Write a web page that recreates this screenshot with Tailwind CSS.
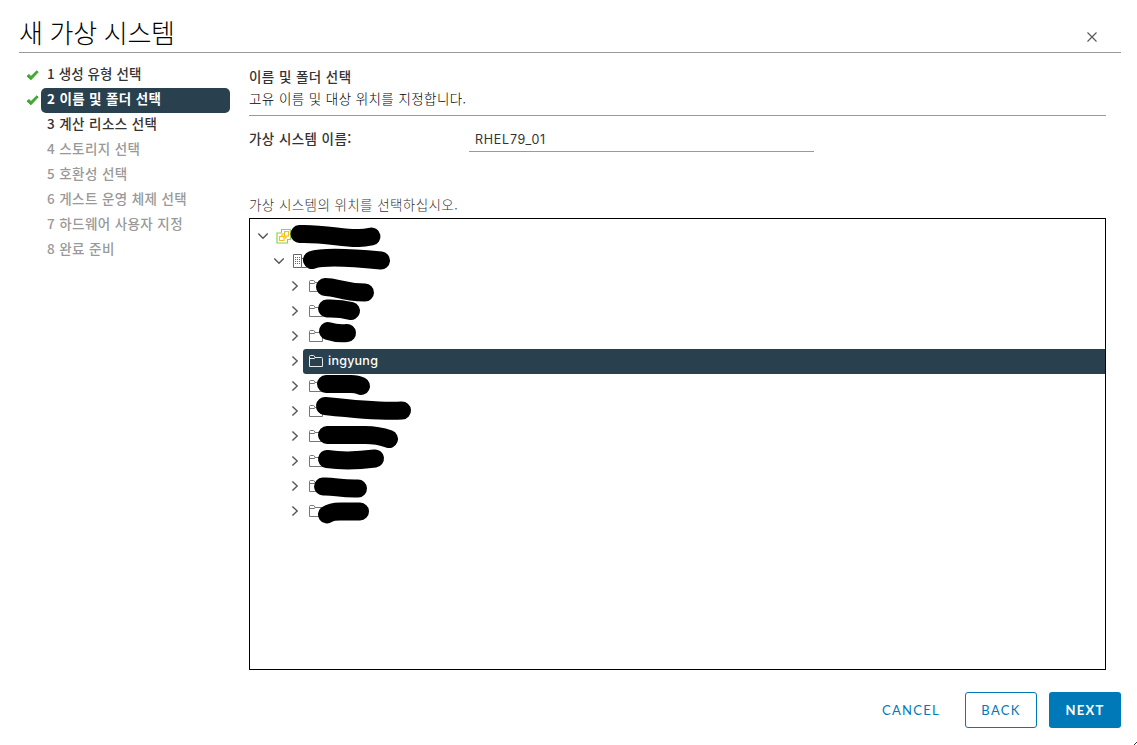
<!DOCTYPE html>
<html lang="ko">
<head>
<meta charset="utf-8">
<title>새 가상 시스템</title>
<script src="https://cdn.jsdelivr.net/npm/@tailwindcss/browser@4"></script>
</head>
<body class="bg-white overflow-hidden">
<svg class="hidden">
  <symbol id="check" viewBox="0 0 13 11"><path d="M1 6.2 2.8 4.4 5 6.4 10.8 .8 12.2 2.1 5 9.8Z" fill="#35b522" stroke="#23851a" stroke-width=".7" stroke-linejoin="round"/></symbol>
  <symbol id="down" viewBox="0 0 12 8"><path d="M1.3 1.5 6 6.2 10.7 1.5" fill="none" stroke="#565656" stroke-width="1.4"/></symbol>
  <symbol id="right" viewBox="0 0 8 12"><path d="M1.4 1.4 6.2 6 1.4 10.6" fill="none" stroke="#565656" stroke-width="1.4"/></symbol>
  <symbol id="folder" viewBox="0 0 14 14"><path d="M.5 2.5Q.5 1.500 1.500 1.500H4.500Q5.500 1.500 6 3.500H12.500Q13.500 3.500 13.500 4.500V12.500H.5ZM.5 4.500H5.500L6 3.500" fill="none" stroke="currentColor"/></symbol>
</svg>
<div class="w-[1137px] h-[745px] relative flex flex-col text-[#333] text-[13.5px] font-['Noto_Sans_CJK_KR',sans-serif] whitespace-nowrap">
  <header class="ml-[19px] mr-4 h-[53px] shrink-0 border-b border-[#9a9a9a] flex justify-between">
    <h1 class="mt-[13px] text-[26px] leading-[38px] tracking-[-0.3px] font-light text-black">새 가상 시스템</h1>
    <svg class="w-[10px] h-[10px] mt-[32px] mr-6" viewBox="0 0 10 10"><path d="M.5 .5 9.5 9.5M9.5 .5 .5 9.5" stroke="#565656" stroke-width="1.1"/></svg>
  </header>
  <div class="flex h-[617px] shrink-0">
    <nav class="w-[249px] pt-[10px] pl-[26px] font-medium tracking-[0.4px]">
      <ol class="leading-[20px]">
        <li class="flex h-[25px] tracking-[0.1px]"><svg class="w-[13px] h-[11px] mr-[2px] mt-[7px]"><use href="#check"/></svg><span class="pl-[6px]">1 생성 유형 선택</span></li>
        <li class="flex h-[25px]"><svg class="w-[13px] h-[11px] mr-[2px] mt-[7px]"><use href="#check"/></svg><span class="pl-[6px] w-[189px] h-[25px] rounded-[5px] bg-[#29404e] text-white font-bold tracking-[0.35px]">2 이름 및 폴더 선택</span></li>
        <li class="h-[25px] pl-[21px]">3 계산 리소스 선택</li>
        <li class="h-[25px] pl-[21px] text-[#999]">4 스토리지 선택</li>
        <li class="h-[25px] pl-[21px] text-[#999]">5 호환성 선택</li>
        <li class="h-[25px] pl-[21px] text-[#999]">6 게스트 운영 체제 선택</li>
        <li class="h-[25px] pl-[21px] text-[#999]">7 하드웨어 사용자 지정</li>
        <li class="h-[25px] pl-[21px] text-[#999]">8 완료 준비</li>
      </ol>
    </nav>
    <main class="w-[857px] flex flex-col tracking-[0.42px]">
      <div class="h-[63px] pt-[12px] border-b border-[#9a9a9a]">
        <h2 class="leading-[22px] font-medium">이름 및 폴더 선택</h2>
        <p class="leading-[22px] font-light text-black">고유 이름 및 대상 위치를 지정합니다.</p>
      </div>
      <div class="flex h-[78px]">
        <label class="w-[220px] pt-[11px] leading-[22px] font-medium">가상 시스템 이름:</label>
        <div class="w-[345px] h-[36px] pt-[12px] pl-[6px] border-b border-[#9a9a9a] font-[Inter] text-[12.5px] leading-[24px] tracking-[0.75px]">RHEL79_01</div>
      </div>
      <p class="h-[24px] leading-[20px] font-light">가상 시스템의 위치를 선택하십시오.</p>
      <div class="relative h-[452px] border border-black pt-[4px] text-[#777]">
        <div class="flex items-center h-[25px] pl-[7px]"><svg class="w-3 h-2"><use href="#down"/></svg>
          <svg class="w-4 h-4 ml-[7px]" viewBox="0 0 16 16" fill="none"><path d="M5.5 4.500V1.500H14.500V11.500H11.500V15H1V5H5.500" stroke="#8fd14a" stroke-width="1.2"/><path d="M8.500 3.500H12.500V8H8.500ZM3.500 8.500H8V12.500H3.500ZM8.500 10H10V8M6 8V6H8" stroke="#f5bd16" stroke-width="1.1"/></svg></div>
        <div class="flex items-center h-[25px] pl-[23px]"><svg class="w-3 h-2"><use href="#down"/></svg>
          <svg class="w-4 h-4 ml-[7px]" viewBox="0 0 16 16" fill="none" stroke="#666"><path d="M1.5 1.5H9.5V14.5H1.5ZM9.5 5.5H14.5V14.5H9.5"/><path d="M3 4.5H9M3 6.5H9M3 8.5H9M3 10.500H9" stroke-dasharray="1 1"/></svg></div>
        <div class="flex items-center h-[25px] pl-[41px]"><svg class="w-2 h-3"><use href="#right"/></svg><svg class="size-[14px] ml-[10px]"><use href="#folder"/></svg></div>
        <div class="flex items-center h-[25px] pl-[41px]"><svg class="w-2 h-3"><use href="#right"/></svg><svg class="size-[14px] ml-[10px]"><use href="#folder"/></svg></div>
        <div class="flex items-center h-[25px] pl-[41px]"><svg class="w-2 h-3"><use href="#right"/></svg><svg class="size-[14px] ml-[10px]"><use href="#folder"/></svg></div>
        <div class="flex items-center h-[25px] pl-[41px]"><svg class="w-2 h-3"><use href="#right"/></svg><div class="flex items-center flex-1 h-[25px] mt-[2px] ml-1 pl-[6px] rounded-l-[3px] bg-[#29404e] text-[#e5eaed]"><svg class="size-[14px] mb-[2px]"><use href="#folder"/></svg><span class="ml-[5px] mb-[2px] font-[Inter] text-[12.5px] leading-[23px] tracking-[0.25px] font-medium text-white">ingyung</span></div></div>
        <div class="flex items-center h-[25px] pl-[41px]"><svg class="w-2 h-3"><use href="#right"/></svg><svg class="size-[14px] ml-[10px]"><use href="#folder"/></svg></div>
        <div class="flex items-center h-[25px] pl-[41px]"><svg class="w-2 h-3"><use href="#right"/></svg><svg class="size-[14px] ml-[10px]"><use href="#folder"/></svg></div>
        <div class="flex items-center h-[25px] pl-[41px]"><svg class="w-2 h-3"><use href="#right"/></svg><svg class="size-[14px] ml-[10px]"><use href="#folder"/></svg></div>
        <div class="flex items-center h-[25px] pl-[41px]"><svg class="w-2 h-3"><use href="#right"/></svg><svg class="size-[14px] ml-[10px]"><use href="#folder"/></svg></div>
        <div class="flex items-center h-[25px] pl-[41px]"><svg class="w-2 h-3"><use href="#right"/></svg><svg class="size-[14px] ml-[10px]"><use href="#folder"/></svg></div>
        <div class="flex items-center h-[25px] pl-[41px]"><svg class="w-2 h-3"><use href="#right"/></svg><svg class="size-[14px] ml-[10px]"><use href="#folder"/></svg></div>
        <!-- marker strokes covering private names -->
        <svg class="absolute left-[-1px] top-[-1px] w-[180px] h-[320px]" viewBox="249 218 180 320" fill="none" stroke="#000" stroke-width="18" stroke-linecap="round" stroke-linejoin="round">
          <path d="M299.500 234C324 233 345 239 359 238Q364 238 371.500 236.500"/>
          <path d="M312 260Q326 255 381 260.500"/>
          <path d="M325 287C338 287 340 292 365 292.500"/>
          <path d="M327 308.500Q340 308 351 311"/>
          <path d="M328 331Q337 334 347 333"/>
          <path d="M326 384H351Q357 384 361 386"/>
          <path d="M325 406Q380 412 402 410.500"/>
          <path d="M327 435H365Q378 435 389 439"/>
          <path d="M327 459Q348 462 375 458.500"/>
          <path d="M323 486.500C335 486 340 489 358 488.500"/>
          <path d="M327 514.500Q332 511 343 511.500H360"/>
        </svg>
      </div>
    </main>
  </div>
  <footer class="flex h-[75px] pt-[22px] pr-4 justify-end gap-3 font-[Lato] text-[13px] tracking-[1.3px] leading-[37px] text-[#0079b8]">
    <button class="w-[84px] h-9 text-center">CANCEL</button>
    <button class="w-[72px] h-9 rounded-[3px] border border-[#0079b8] leading-[35px]">BACK</button>
    <button class="w-[72px] h-9 rounded-[3px] bg-[#0079b8] text-white font-bold">NEXT</button>
  </footer>
  <svg class="absolute right-0 bottom-0 w-[3px] h-[3px]"><path d="M0 3 3 0" stroke="#333"/></svg>
</div>
</body>
</html>
